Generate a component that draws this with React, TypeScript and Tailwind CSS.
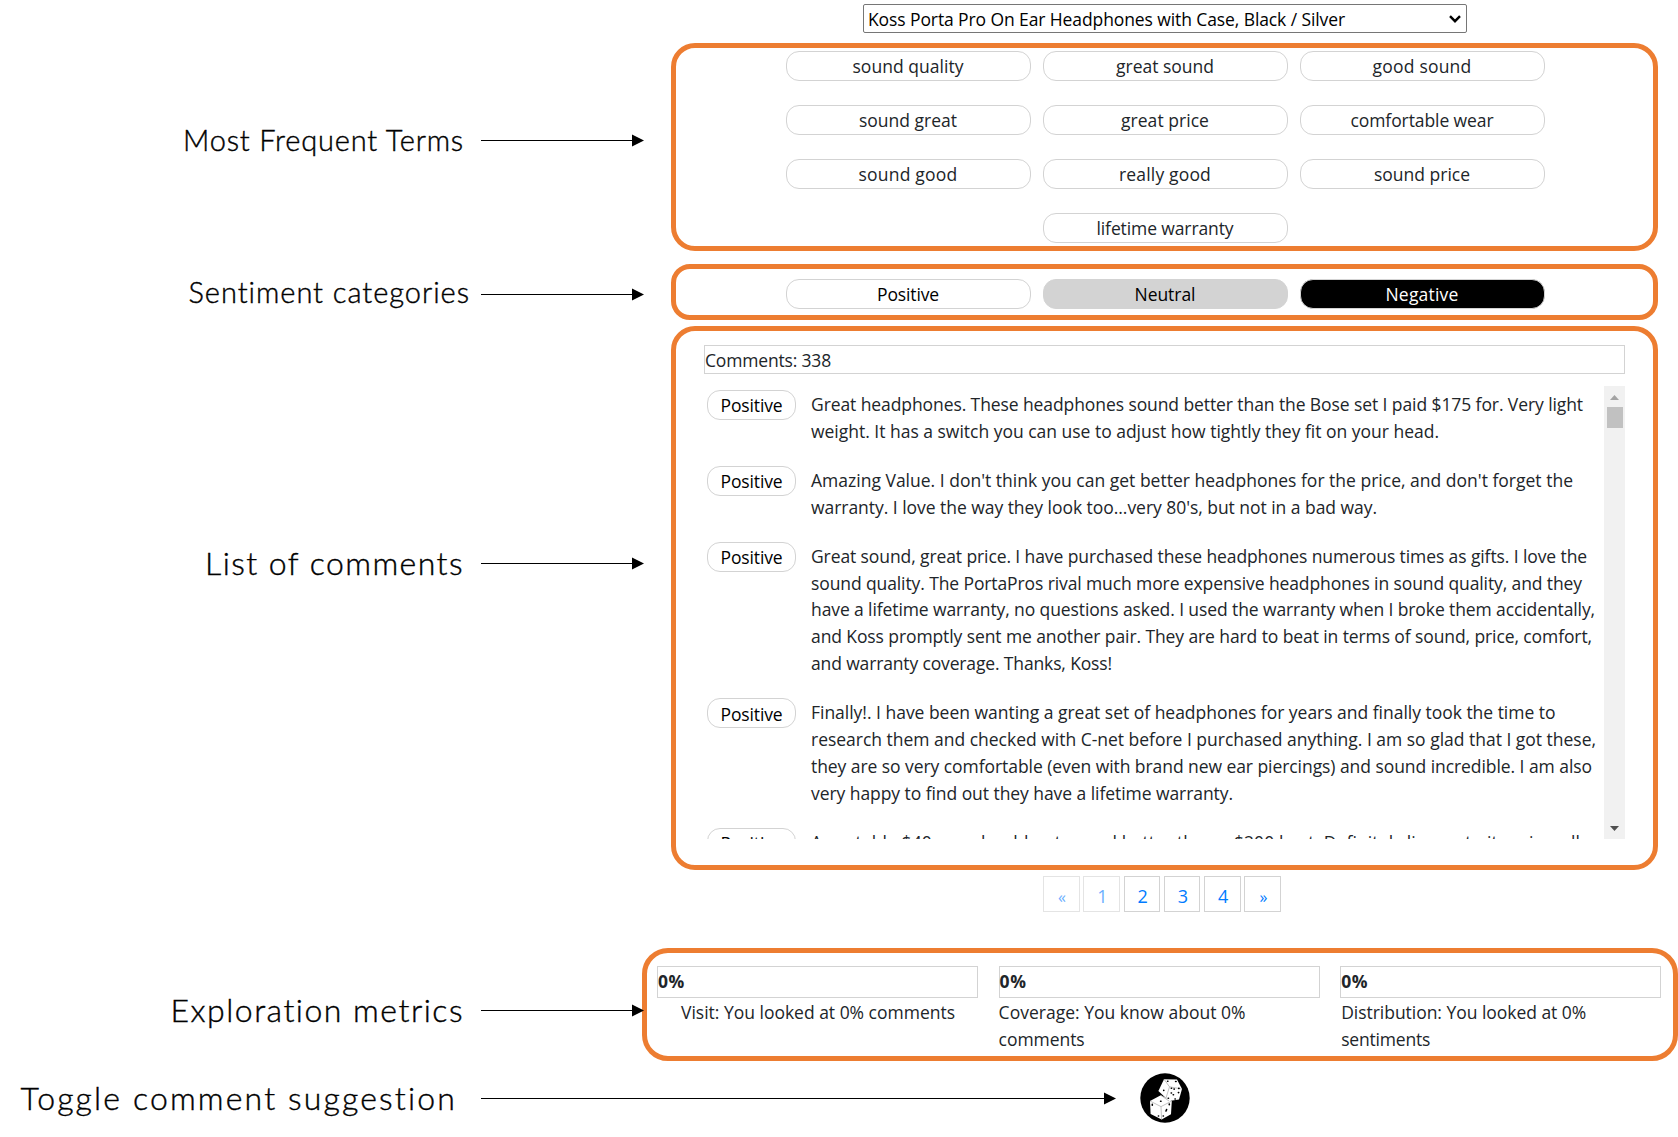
import { useLayoutEffect, useRef } from "react";
import type { ReactNode } from "react";

/** One line of text, tracked so that it fills the given width. */
function Fit({ w, children, className = "" }: { w: number; children: string; className?: string }) {
  const ref = useRef<HTMLSpanElement>(null);
  useLayoutEffect(() => {
    const el = ref.current;
    if (!el) return;
    el.style.letterSpacing = "0px";
    const natural = el.getBoundingClientRect().width;
    el.style.letterSpacing = `${(w - natural) / children.length}px`;
  }, [w, children]);
  return (
    <span ref={ref} className={`inline-block shrink-0 whitespace-nowrap ${className}`}>
      {children}
    </span>
  );
}

function Arrow({ className }: { className: string }) {
  return (
    <div className={`z-10 flex h-3 shrink-0 items-center ${className}`}>
      <div className="h-px flex-1 bg-black" />
      <svg className="h-[13px] w-3" viewBox="0 0 12 13">
        <path d="M0 0.5 12 6.5 0 12.5Z" fill="#000" />
      </svg>
    </div>
  );
}

function Label({ text, w, className, size, end }: { text: string; w: number; className: string; size: string; end: string }) {
  return (
    <div className={`flex h-10 items-center ${className}`}>
      <div className={`flex w-[481px] shrink-0 justify-end leading-10 ${size} ${end}`}>
        <Fit w={w}>{text}</Fit>
      </div>
      <Arrow className="w-[163px]" />
    </div>
  );
}

function Frame({ className, children }: { className: string; children: ReactNode }) {
  return <section className={`border-[5px] border-[#ed7d31] ${className}`}>{children}</section>;
}

function Pill({ text, w, className = "border-[#d3d3d3]" }: { text: string; w: number; className?: string }) {
  return (
    <button className={`flex h-[30px] w-[245px] items-center justify-center rounded-[13px] border pt-px pr-px ${className}`}>
      <Fit w={w}>{text}</Fit>
    </button>
  );
}

const terms: [string, number][] = [
  ["sound quality", 111],
  ["great sound", 98],
  ["good sound", 99],
  ["sound great", 98],
  ["great price", 88],
  ["comfortable wear", 143],
  ["sound good", 99],
  ["really good", 92],
  ["sound price", 96],
  ["lifetime warranty", 137],
];

const comments: [string, number][][] = [
  [
    ["Great headphones. These headphones sound better than the Bose set I paid $175 for. Very light", 772],
    ["weight. It has a switch you can use to adjust how tightly they fit on your head.", 628],
  ],
  [
    ["Amazing Value. I don't think you can get better headphones for the price, and don't forget the", 762],
    ["warranty. I love the way they look too...very 80's, but not in a bad way.", 566],
  ],
  [
    ["Great sound, great price. I have purchased these headphones numerous times as gifts. I love the", 776],
    ["sound quality. The PortaPros rival much more expensive headphones in sound quality, and they", 771],
    ["have a lifetime warranty, no questions asked. I used the warranty when I broke them accidentally,", 784],
    ["and Koss promptly sent me another pair. They are hard to beat in terms of sound, price, comfort,", 781],
    ["and warranty coverage. Thanks, Koss!", 301],
  ],
  [
    ["Finally!. I have been wanting a great set of headphones for years and finally took the time to", 744.5],
    ["research them and checked with C-net before I purchased anything. I am so glad that I got these,", 785],
    ["they are so very comfortable (even with brand new ear piercings) and sound incredible. I am also", 781],
    ["very happy to find out they have a lifetime warranty.", 422],
  ],
  [["A portable $40 one should not sound better than a $200 best. Definitely live up to its price, all", 769]],
];

const metrics: { pad: string; lines: [string, number][] }[] = [
  { pad: "pl-6", lines: [["Visit: You looked at 0% comments", 274]] },
  { pad: "", lines: [["Coverage: You know about 0%", 247], ["comments", 86]] },
  { pad: "pl-px", lines: [["Distribution: You looked at 0%", 245], ["sentiments", 89]] },
];

function Dice() {
  return (
    <svg className="size-[50px]" viewBox="0 0 50 50">
      <circle cx="25" cy="25" r="24.7" fill="#000" />
      <g fill="#fff">
        <path d="M24 6.2 37 6.4 42 16 39 26.5 29 28 18.4 18Z" />
        <path d="M20.8 22.3 31.8 28 31 41.3 21.6 46.6 10.6 41 10 28Z" />
      </g>
      <g fill="none" stroke="#999" strokeWidth=".6">
        <path d="M24 6.2 29.5 13.8 42 16M29.5 13.8 26 25M10 28 21 33.6 31.8 28M21 33.6 21.6 46.6M20.8 22.3 29 28" />
      </g>
      <g stroke="#000" strokeWidth="1.6" strokeLinecap="round">
        <path d="M27.6 8.2h.3M35.6 8.5h.5M31.3 15.2h.3M34 16.1h.3M38.7 15.4h.3M31.2 20h.3M33.2 21.8h.3M38.4 19.6h.3M28.2 25.2h.3M35 26h.3M23.7 17.4h.1" />
        <path d="M20.6 28.2h.4M12.3 31.4v.8M29.3 31v.8M26.6 36.6l-.6 1.4M18.4 43h.2M23.2 43h.2" />
      </g>
    </svg>
  );
}

export default function App() {
  return (
    <main className="h-[1137px] w-[1678px] overflow-hidden bg-white font-['Open_Sans','Noto_Sans',sans-serif] text-[17.5px] text-[#212529]">
      <div className="flex h-[1061px]">
        <aside className="flex w-[642px] shrink-0 flex-col font-[Lato,sans-serif] font-light text-black [-webkit-text-stroke:0.4px_black]">
          <Label text="Most Frequent Terms" w={281} size="pb-px text-[29px]" end="pr-[17px]" className="mt-[120px]" />
          <Label text="Sentiment categories" w={282} size="pb-1 text-[29px]" end="pr-[11px]" className="mt-[114px]" />
          <Label text="List of comments" w={259} size="pb-px text-[32px]" end="pr-[17px]" className="mt-[229px]" />
          <Label text="Exploration metrics" w={294} size="text-[32px]" end="pr-[17px]" className="mt-[407px]" />
        </aside>

        <div className="flex w-[1036px] shrink-0 flex-col">
          <div className="mt-1 ml-[221px] flex h-[29px] w-[604px] items-center justify-between rounded-[2px] border border-[#767676] pt-px pr-[5px] pl-[4px] text-black">
            <Fit w={477}>Koss Porta Pro On Ear Headphones with Case, Black / Silver</Fit>
            <svg className="mb-px h-2 w-3" viewBox="0 0 12 8" fill="none" stroke="#000" strokeWidth="2.4">
              <path d="M1 1.2 6 6.2 11 1.2" />
            </svg>
          </div>

          <Frame className="mt-[10px] ml-[29px] h-[208px] w-[987px] rounded-[24px]">
            <div className="mt-[3px] ml-[110px] flex w-[759px] flex-wrap justify-center gap-x-3 gap-y-6">
              {terms.map(([t, w]) => (
                <Pill key={t} text={t} w={w} />
              ))}
            </div>
          </Frame>

          <Frame className="mt-[13px] ml-[29px] h-[56px] w-[987px] rounded-[19px]">
            <div className="mt-[10px] ml-[110px] flex gap-3 text-black">
              <Pill text="Positive" w={62} />
              <Pill text="Neutral" w={61} className="border-[#d3d3d3] bg-[#d3d3d3]" />
              <Pill text="Negative" w={73} className="border-[#d3d3d3] bg-black text-white" />
            </div>
          </Frame>

          <Frame className="mt-[6px] ml-[29px] h-[544px] w-[987px] rounded-[24px]">
            <div className="mt-[14px] ml-7 flex h-[29px] w-[921px] items-center border border-[#d3d3d3] pt-px">
              <Fit w={126}>Comments: 338</Fit>
            </div>
            <div className="mt-3 ml-7 flex h-[453px] w-[921px] overflow-hidden">
              <div className="flex w-[900px] flex-col gap-[22px] pt-[4px] pl-[3px]">
                {comments.map((lines, i) => (
                  <article key={i} className="flex shrink-0 items-start">
                    <div className="-mb-3 flex h-[30px] w-[89px] shrink-0 items-center justify-center rounded-[13px] border border-[#d3d3d3] pt-px text-black">
                      <Fit w={62}>Positive</Fit>
                    </div>
                    <div className="-mb-px ml-[15px] flex flex-col items-start pt-px leading-[26.9px]">
                      {lines.map(([t, w]) => (
                        <Fit key={t} w={w}>
                          {t}
                        </Fit>
                      ))}
                    </div>
                  </article>
                ))}
              </div>
              <div className="flex w-[21px] shrink-0 flex-col items-center bg-[#f1f1f1]">
                <svg className="mt-[9px] h-[5px] w-[9px]" viewBox="0 0 9 5">
                  <path d="M0 5 4.5 0 9 5Z" fill="#a3a3a3" />
                </svg>
                <div className="mt-[7px] h-[21px] w-4 bg-[#c1c1c1]" />
                <svg className="mt-auto mb-2 h-[5px] w-[9px]" viewBox="0 0 9 5">
                  <path d="M0 0 4.5 5 9 0Z" fill="#505050" />
                </svg>
              </div>
            </div>
          </Frame>

          <nav className="mt-[6px] ml-[401px] flex gap-[3.8px] text-[18px] text-[#007bff]">
            {["«", "1", "2", "3", "4", "»"].map((p, i) => (
              <button
                key={p}
                className={`flex h-[36px] w-[36.5px] items-center justify-center border border-[#d3d3d3] pl-[1.5px] ${i < 2 ? "opacity-60" : ""} ${i % 5 ? "pt-1" : "pt-[5px] text-[16px]"}`}
              >
                {p}
              </button>
            ))}
          </nav>

          <Frame className="mt-[36px] h-[113px] w-[1036px] rounded-[26px]">
            <div className="mt-[13px] ml-[10px] flex gap-[20.3px]">
              {metrics.map((m) => (
                <div key={m.lines[0][0]} className="w-[321.3px] shrink-0">
                  <div className="flex h-8 items-center border border-[#d3d3d3] pb-px font-bold">
                    <Fit w={27}>0%</Fit>
                  </div>
                  <div className={`flex flex-col items-start pt-px leading-[27px] ${m.pad}`}>
                    {m.lines.map(([t, w]) => (
                      <Fit key={t} w={w}>
                        {t}
                      </Fit>
                    ))}
                  </div>
                </div>
              ))}
            </div>
          </Frame>
        </div>
      </div>

      <div className="mt-3 flex h-[50px] items-center font-[Lato,sans-serif] text-[32px] font-light text-black [-webkit-text-stroke:0.4px_black]">
        <div className="flex w-[481px] shrink-0 justify-end pr-[24px] pb-px leading-10">
          <Fit w={437}>Toggle comment suggestion</Fit>
        </div>
        <Arrow className="mr-6 w-[635px]" />
        <Dice />
      </div>
    </main>
  );
}
